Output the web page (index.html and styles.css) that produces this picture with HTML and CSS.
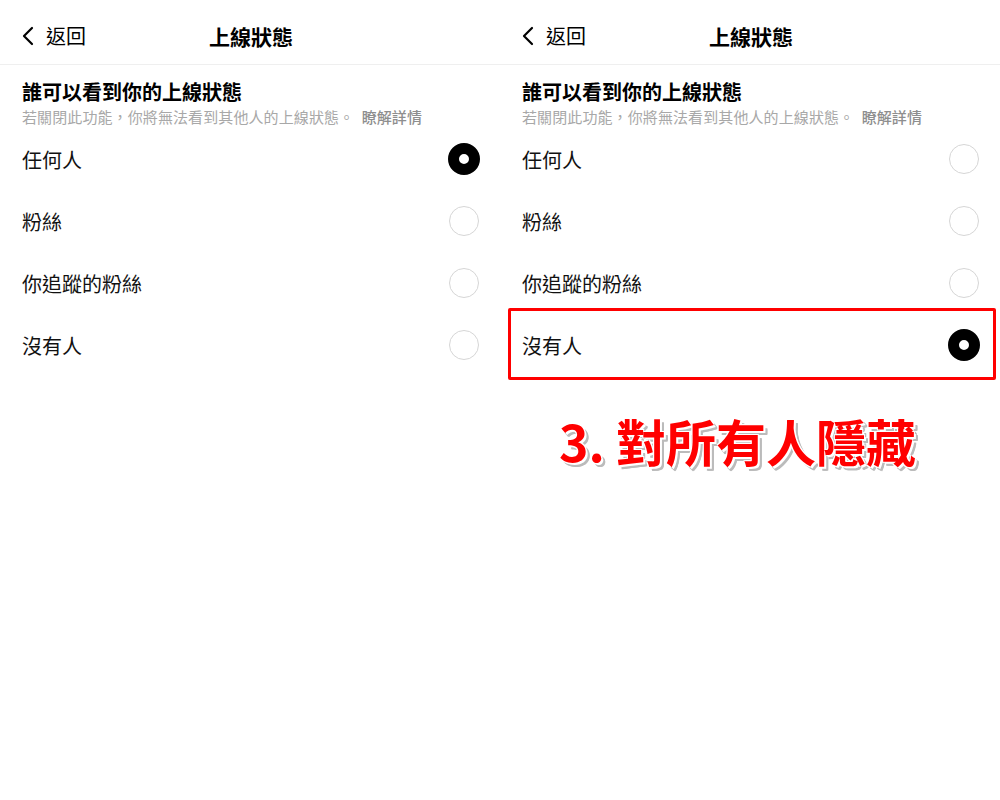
FILE: index.html
```html
<!DOCTYPE html>
<html lang="zh-Hant">
<head>
<meta charset="utf-8">
<title>上線狀態</title>
<link rel="stylesheet" href="styles.css">
</head>
<body>
<div class="page">
  <section class="panel">
    <header class="topbar">
      <div class="back">
        <svg class="chev" width="12" height="20" viewBox="0 0 12 20"><polyline points="10,2 2,10 10,18" fill="none" stroke="#000" stroke-width="2.2" stroke-linecap="round" stroke-linejoin="round"/></svg>
        <span>返回</span>
      </div>
      <div class="title">上線狀態</div>
      <div></div>
    </header>
    <div class="intro">
      <h2 class="heading">誰可以看到你的上線狀態</h2>
      <p class="sub">若關閉此功能，你將無法看到其他人的上線狀態。 <span class="more">瞭解詳情</span></p>
    </div>
    <ul class="options">
      <li class="opt"><span>任何人</span><span class="radio on"></span></li>
      <li class="opt"><span>粉絲</span><span class="radio"></span></li>
      <li class="opt"><span>你追蹤的粉絲</span><span class="radio"></span></li>
      <li class="opt"><span>沒有人</span><span class="radio"></span></li>
    </ul>
  </section>
  <section class="panel">
    <header class="topbar">
      <div class="back">
        <svg class="chev" width="12" height="20" viewBox="0 0 12 20"><polyline points="10,2 2,10 10,18" fill="none" stroke="#000" stroke-width="2.2" stroke-linecap="round" stroke-linejoin="round"/></svg>
        <span>返回</span>
      </div>
      <div class="title">上線狀態</div>
      <div></div>
    </header>
    <div class="intro">
      <h2 class="heading">誰可以看到你的上線狀態</h2>
      <p class="sub">若關閉此功能，你將無法看到其他人的上線狀態。 <span class="more">瞭解詳情</span></p>
    </div>
    <ul class="options">
      <li class="opt"><span>任何人</span><span class="radio"></span></li>
      <li class="opt"><span>粉絲</span><span class="radio"></span></li>
      <li class="opt"><span>你追蹤的粉絲</span><span class="radio"></span></li>
      <li class="opt marked"><span>沒有人</span><span class="radio on"></span></li>
    </ul>
    <div class="callout">3. 對所有人隱藏</div>
  </section>
</div>
</body>
</html>
```
FILE: styles.css
```css
* { box-sizing: border-box; }
html, body { margin: 0; padding: 0; background: #fff; }
body {
  font-family: "Noto Sans CJK TC", "Noto Sans", sans-serif;
  color: #000;
}
.page {
  display: flex;
  width: 1000px;
  height: 800px;
}
.panel {
  width: 500px;
  flex: 0 0 500px;
}
.topbar {
  height: 65px;
  display: grid;
  grid-template-columns: 1fr auto 1fr;
  align-items: center;
  border-bottom: 1px solid #efefef;
  padding: 8px 20px 0 22px;
}
.back {
  display: flex;
  align-items: center;
  gap: 12px;
  font-size: 20px;
  line-height: 24px;
}
.chev { display: block; }
.title {
  font-size: 21px;
  font-weight: 700;
  line-height: 24px;
}
.intro {
  padding: 15px 20px 0 22px;
}
.heading {
  margin: 0;
  font-size: 20px;
  font-weight: 700;
  line-height: 24px;
}
.sub {
  margin: 4px 0 0;
  font-size: 15px;
  line-height: 18px;
  color: #a8a8a8;
  letter-spacing: 0.1px;
}
.more {
  color: #8e8e8e;
  font-weight: 500;
  margin-left: 4px;
}
.options {
  list-style: none;
  margin: 2px 0 0;
  padding: 0;
}
.opt {
  position: relative;
  height: 62px;
  display: flex;
  align-items: center;
  justify-content: space-between;
  padding: 0 20px 0 22px;
  font-size: 20px;
  color: #111;
}
.radio {
  width: 30px;
  height: 30px;
  border-radius: 50%;
  border: 1.5px solid #d6d6d6;
  margin-right: 1px;
}
.radio.on {
  width: 32px;
  height: 32px;
  margin-right: 0;
  border: 11px solid #000;
  background: #fff;
}
.marked::after {
  content: "";
  position: absolute;
  left: 8px;
  right: 4px;
  top: -6px;
  bottom: -4px;
  border: 3px solid #f00;
  border-radius: 2px;
}
.callout {
  margin-top: 39px;
  padding-left: 59px;
  font-size: 50px;
  line-height: 50px;
  font-weight: 700;
  color: #f00;
  text-shadow:
    2px 2px 0 #fff, -1px -1px 0 #fff, 1px -1px 0 #fff, -1px 1px 0 #fff,
    4px 4px 0 #bbb, 3px 4px 0 #bbb, 4px 3px 0 #bbb;
}
```
